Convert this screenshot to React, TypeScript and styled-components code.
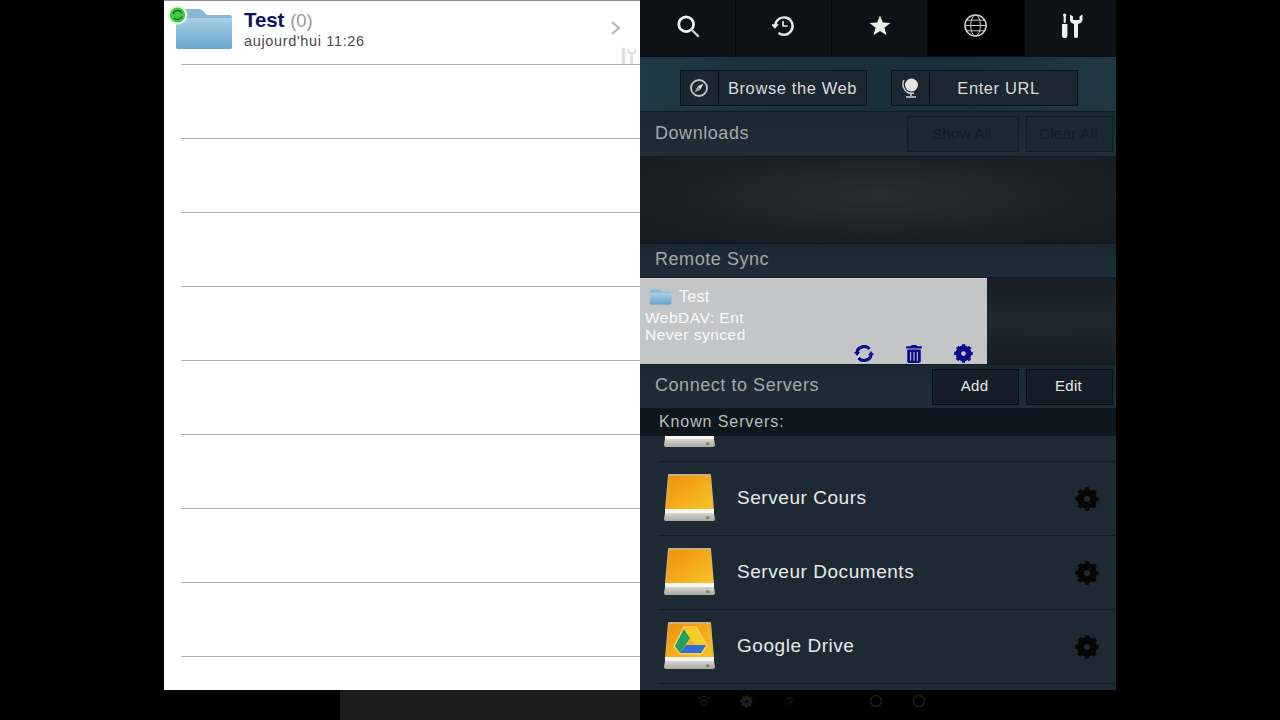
import React from "react";
import styled, { createGlobalStyle } from "styled-components";
import { FaTrashAlt } from "react-icons/fa";

const Global = createGlobalStyle`
  html, body { margin: 0; padding: 0; background: #000; height: 720px; overflow: hidden; }
  * { box-sizing: border-box; }
`;

const Page = styled.div`
  width: 1280px; height: 720px; display: flex; flex-direction: column; align-items: center;
  background: #000; font-family: "Liberation Sans", Arial, sans-serif;
`;
const Stage = styled.div`
  width: 952px; height: 690px; display: grid; grid-template-columns: 476px 476px; flex: none;
`;
const FileList = styled.div`
  position: relative; background: #fff; height: 690px; overflow: hidden; border-top: 1px solid #8f8f8f;
`;
const FileRow = styled.div<{ $first?: boolean }>`
  height: ${p => (p.$first ? 64 : 74)}px; margin-left: 17px; border-bottom: 1px solid #b4b4b4; flex: none;
`;
const FirstRowContent = styled.div`
  height: 100%; margin-left: -17px; display: flex; align-items: flex-start; position: relative;
`;
const FolderWrap = styled.div`
  width: 80px; padding: 7px 0 0 11px; flex: none; position: relative;
`;
const SyncBadge = styled.div`
  position: absolute; left: 3px; top: 4px; width: 21px; height: 20px;
`;
const FileText = styled.div`
  padding-top: 7px; display: flex; flex-direction: column; gap: 2px;
`;
const FileTitle = styled.div`
  font-size: 20.5px; line-height: 23px; font-weight: 700; color: #0b1560; letter-spacing: -0.1px;
`;
const FileCount = styled.span`
  font-weight: 400; color: #9a9a9a; margin-left: 6px; font-size: 18.5px;
`;
const FileDate = styled.div`
  font-size: 14.5px; line-height: 17px; color: #4a4a4a; letter-spacing: 0.65px; margin-top: -1px;
`;
const Chevron = styled.svg`
  position: absolute; right: 18px; top: 19px;
`;
const GhostTools = styled.svg`
  position: absolute; right: 3px; top: 46px; opacity: 0.25;
`;

const Side = styled.div`
  background: #1d2a34; height: 690px; display: flex; flex-direction: column; overflow: hidden; color: #eee;
`;
const Tabs = styled.div`
  height: 57px; flex: none; display: grid; grid-template-columns: 95px 95px 95px 96px 1fr; background: #05070a; gap: 1px;
  border-bottom: 1px solid #0a0e12;
`;
const Tab = styled.div<{ $active?: boolean }>`
  background: ${p => (p.$active ? "#000" : "#0e1217")};
  display: flex; align-items: center; justify-content: center; padding-bottom: 5px; height: 56px;
`;
const BrowseBar = styled.div`
  height: 55px; flex: none; display: flex; padding: 13px 0 0 40px; gap: 24px;
  background: linear-gradient(90deg, #1f3a44 0%, #1b303b 30%, #1b2f3a 70%, #213843 100%);
  border-bottom: 1px solid #0f1a21;
`;
const BrowseButton = styled.div`
  width: 187px; height: 36px; display: flex; background: #1a2630; border: 1px solid #0c1318;
`;
const BrowseIcon = styled.div`
  width: 38px; flex: none; display: flex; align-items: center; justify-content: center; border-right: 1px solid #0c1318;
`;
const BrowseLabel = styled.div<{ $shift?: number }>`
  flex: 1; display: flex; align-items: center; justify-content: center; font-size: 16.5px; color: #d9dcdc; letter-spacing: 0.6px;
  padding: 1px ${p => p.$shift ?? 0}px 0 0;
`;
const Header = styled.div<{ $h: number }>`
  height: ${p => p.$h}px; flex: none; display: flex; align-items: center; padding: 0 3px 0 15px; gap: 7px;
  background: linear-gradient(180deg, #1a2831, #1e2d37);
  border-bottom: 1px solid #0f1a21;
`;
const HeaderTitle = styled.div`
  flex: 1; font-size: 18px; color: #a3a9a9; letter-spacing: 0.55px; padding-bottom: 2px;
`;
const HeaderButton = styled.div<{ $w: number; $off?: boolean }>`
  width: ${p => p.$w}px; height: 36px; display: flex; align-items: center; justify-content: center;
  font-size: 15px; letter-spacing: 0.3px; padding: 0 2px 2px 0;
  color: ${p => (p.$off ? "#121d25" : "#e6e8e8")};
  background: ${p => (p.$off ? "#1a2832" : "#151e26")};
  border: 1px solid ${p => (p.$off ? "#121c24" : "#090e12")};
`;
const EmptyWell = styled.div`
  height: 87px; flex: none;
  background: radial-gradient(ellipse at 50% 45%, #262d33 0%, #1b2329 55%, #141b21 100%);
  border-bottom: 1px solid #0f1a21;
`;
const SyncArea = styled.div`
  height: 87px; flex: none; display: flex;
  background: radial-gradient(ellipse at 85% 50%, #20282f 0%, #161d24 80%);
  border-bottom: 1px solid #0f1a21;
`;
const SyncTile = styled.div`
  width: 347px; height: 86px; background: #c3c5c7; border-top: 1px solid #d8d8d8;
  padding: 9px 0 0 5px; display: flex; flex-direction: column; color: #fafafa;
`;
const SyncName = styled.div`
  display: flex; align-items: center; gap: 6px; padding-left: 3px; font-size: 16.5px; height: 17px; margin-bottom: 4px;
`;
const SyncLine = styled.div`
  font-size: 15.5px; line-height: 17px; letter-spacing: 0.5px;
`;
const SyncActions = styled.div`
  margin-top: auto; display: flex; justify-content: flex-end; align-items: center; gap: 31px; padding: 0 14px 1px 0; color: #0a0a8c; height: 20px;
`;
const KnownBar = styled.div`
  height: 27px; flex: none; display: flex; align-items: center; padding: 0 0 2px 19px;
  background: #0e171d; font-size: 16px; color: #b9bebe; letter-spacing: 0.9px;
`;
const Servers = styled.div`
  flex: 1; min-height: 0; overflow: hidden; background: #1d2a34;
`;
const ServerScroll = styled.div`
  margin-top: -48px;
`;
const ServerRow = styled.div`
  height: 74px; margin-left: 19px; display: flex; align-items: center; border-bottom: 1px solid #121c24; position: relative;
`;
const DriveSlot = styled.div`
  width: 78px; flex: none; padding-left: 5px; display: flex; align-items: center;
`;
const ServerName = styled.div`
  flex: 1; font-size: 19px; color: #e8eaea; letter-spacing: 0.55px; padding-bottom: 2px;
`;
const GearSlot = styled.div`
  width: 41px; flex: none; display: flex; justify-content: flex-start;
`;

const Footer = styled.div`
  width: 952px; height: 30px; flex: none; display: grid; grid-template-columns: 476px 476px;
`;
const FooterLeft = styled.div`
  display: flex; justify-content: flex-end;
`;
const DarkStrip = styled.div`
  width: 300px; height: 30px; background: #1d1d1d;
`;
const FooterRight = styled.div`
  display: flex; align-items: flex-start; padding: 3px 0 0 42px; color: #1f1f1f; font-size: 13px;
`;
const FooterItem = styled.div`
  width: 43px; height: 16px; display: flex; align-items: center; justify-content: center;
`;

const Folder = ({ w, h }: { w: number; h: number }) => {
  const id = `fold${w}`;
  return (
    <svg width={w} height={h} viewBox="0 0 58 42">
      <defs>
        <linearGradient id={id} x1="0" y1="0" x2="0" y2="1">
          <stop offset="0" stopColor="#a8d0e6" />
          <stop offset="1" stopColor="#68a6ca" />
        </linearGradient>
      </defs>
      <path d="M2 5 Q2 1 6 1 H24 Q27 1 29 4 L32 7 H55 Q57 7 57 10 V39 Q57 41 55 41 H3 Q1 41 1 39 Z" fill="#86b8d4" />
      <path d="M1 10 H57 V39 Q57 41 55 41 H3 Q1 41 1 39 Z" fill={`url(#${id})`} />
    </svg>
  );
};

const Gear = ({ size, color }: { size: number; color: string }) => (
  <svg width={size} height={size} viewBox="0 0 24 24" fill="none" stroke={color}>
    <circle cx="12" cy="12" r="6.5" strokeWidth="7" />
    <circle cx="12" cy="12" r="10" strokeWidth="3.6" strokeDasharray="3.9 3.95" strokeDashoffset="2" />
  </svg>
);

const Drive = ({ google }: { google?: boolean }) => {
  const id = google ? "driveG" : "driveO";
  return (
    <svg width="52" height="49" viewBox="0 0 52 49">
      <defs>
        <linearGradient id={id} x1="0" y1="0" x2="1" y2="1">
          <stop offset="0" stopColor="#ee9010" />
          <stop offset="0.6" stopColor="#f6ae1c" />
          <stop offset="1" stopColor="#f6c42e" />
        </linearGradient>
        <linearGradient id={`${id}b`} x1="0" y1="0" x2="0" y2="1">
          <stop offset="0" stopColor="#d8d6d0" />
          <stop offset="1" stopColor="#a8a8a4" />
        </linearGradient>
      </defs>
      <path d="M4 1 Q4 0 5 0 H46 Q47 0 47 1 L50 35 H1 Z" fill="#cdb07a" />
      <path d="M5 2 H46 L49 35 H2 Z" fill={`url(#${id})`} />
      <rect x="1" y="35" width="49" height="4" fill="#f8f6ee" />
      <path d="M1 39 H50 L51 45 Q51 47 49 47 H2 Q0 47 0 45 Z" fill={`url(#${id}b)`} />
      <rect x="42" y="42.5" width="3.5" height="2.5" fill="#7d8a55" />
      {google && (
        <g>
          <path d="M10 24 L20 5 H32 L43 24 L37 32 H16 Z" fill="#f6b62a" stroke="#f7dc7a" strokeWidth="1.2" />
          <path d="M20 7 L11 24 L16 31 L26 16 Z" fill="#1ea362" />
          <path d="M20 7 H32 L41 23 H31 Z" fill="#f7cc24" />
          <path d="M22 23 H42 L37 31 H16 Z" fill="#2f6fd8" />
        </g>
      )}
    </svg>
  );
};

const ToolsIcon = ({ size = 26, color = "#eeeeee" }: { size?: number; color?: string }) => (
  <svg width={size} height={size} viewBox="0 0 26 26" fill={color}>
    <rect x="5.6" y="1" width="2.2" height="9" rx="1" />
    <circle cx="6.7" cy="2" r="1.6" />
    <path d="M4 11 H9.4 V23 Q9.4 25 7.6 25 H5.8 Q4 25 4 23 Z" />
    <path d="M12 1.5 V6.5 Q12 10 16 11 V23.5 Q16 25 18 25 Q20 25 20 23.5 V11 Q24.5 10 24.5 6.5 V1.5 L21.5 3.5 V7 H15 V3.5 Z" />
  </svg>
);

const App = () => (
  <Page>
    <Global />
    <Stage>
      <FileList>
        <FileRow $first>
          <FirstRowContent>
            <FolderWrap>
              <Folder w={58} h={42} />
              <SyncBadge>
                <svg width="21" height="20" viewBox="0 0 21 20">
                  <ellipse cx="10.5" cy="10" rx="10" ry="9.5" fill="#e4f5de" />
                  <circle cx="10.5" cy="10" r="7.6" fill="#45c945" />
                  <path d="M6 9 A4.8 4.8 0 0 1 15 8.5 M15 11.5 A4.8 4.8 0 0 1 7 13" fill="none" stroke="#0f7a2a" strokeWidth="1.5" />
                </svg>
              </SyncBadge>
            </FolderWrap>
            <FileText>
              <FileTitle>Test<FileCount>(0)</FileCount></FileTitle>
              <FileDate>aujourd'hui 11:26</FileDate>
            </FileText>
            <Chevron width="12" height="16" viewBox="0 0 12 16">
              <path d="M2 2 L9 8 L2 14" fill="none" stroke="#b4b4b4" strokeWidth="2.2" />
            </Chevron>
            <GhostTools width="18" height="18" viewBox="0 0 26 26" fill="#888">
              <rect x="4" y="1" width="5" height="24" rx="2" />
              <path d="M12 1.5 V7 Q12 10 16 11 V25 H20 V11 Q24.5 10 24.5 7 V1.5 L21.5 3.5 V7 H15 V3.5 Z" />
            </GhostTools>
          </FirstRowContent>
        </FileRow>
        {Array.from({ length: 8 }).map((_, i) => <FileRow key={i} />)}
      </FileList>

      <Side>
        <Tabs>
          <Tab>
            <svg width="24" height="24" viewBox="0 0 26 26" fill="none">
              <circle cx="11" cy="11" r="8" stroke="#f4f4f4" strokeWidth="3" />
              <path d="M17 17 L24 24" stroke="#cfcfcf" strokeWidth="2.4" strokeLinecap="round" />
            </svg>
          </Tab>
          <Tab>
            <svg width="24" height="22" viewBox="2 0 26 24" fill="none">
              <path d="M5.5 11 A9.5 9.5 0 1 1 9 19.5" stroke="#e8e8e8" strokeWidth="2.6" />
              <path d="M0.5 10 L9.5 10 L5 15 Z" fill="#e8e8e8" />
              <path d="M14 6.5 V12 H19" stroke="#e8e8e8" strokeWidth="1.8" />
            </svg>
          </Tab>
          <Tab>
            <svg width="22" height="21" viewBox="0 0 22 21">
              <path d="M11 0.5 L13.8 7.6 L21.4 8 L15.5 12.8 L17.5 20.2 L11 16 L4.5 20.2 L6.5 12.8 L0.6 8 L8.2 7.6 Z" fill="#ececec" />
            </svg>
          </Tab>
          <Tab $active>
            <svg width="25" height="25" viewBox="1 0 26 26" fill="none" stroke="#cfcfcf">
              <circle cx="13" cy="13" r="11" strokeWidth="1.6" />
              <ellipse cx="13" cy="13" rx="5" ry="11" strokeWidth="1" />
              <path d="M2 13 H24 M4 7.5 H22 M4 18.5 H22" strokeWidth="1" />
            </svg>
          </Tab>
          <Tab><ToolsIcon /></Tab>
        </Tabs>

        <BrowseBar>
          <BrowseButton>
            <BrowseIcon>
              <svg width="20" height="20" viewBox="1 0 20 20" fill="none">
                <circle cx="10" cy="10" r="8" stroke="#c8c8c8" strokeWidth="1.8" />
                <path d="M14.5 5.5 L11.5 11.5 L8.5 8.5 Z" fill="#e0e0e0" />
                <path d="M5.5 14.5 L8.5 8.5 L11.5 11.5 Z" fill="#a8a8a8" />
              </svg>
            </BrowseIcon>
            <BrowseLabel>Browse the Web</BrowseLabel>
          </BrowseButton>
          <BrowseButton>
            <BrowseIcon>
              <svg width="20" height="22" viewBox="0 0 20 22" fill="none">
                <circle cx="10.5" cy="8" r="6.5" fill="#e4e4e4" />
                <path d="M3 3 A9 9 0 0 0 13 16" stroke="#d0d0d0" strokeWidth="1.5" />
                <path d="M10 16 V19 M5 20 H15" stroke="#d0d0d0" strokeWidth="1.5" />
              </svg>
            </BrowseIcon>
            <BrowseLabel $shift={10}>Enter URL</BrowseLabel>
          </BrowseButton>
        </BrowseBar>

        <Header $h={45}>
          <HeaderTitle>Downloads</HeaderTitle>
          <HeaderButton $w={112} $off>Show All</HeaderButton>
          <HeaderButton $w={87} $off>Clear All</HeaderButton>
        </Header>
        <EmptyWell />

        <Header $h={34}>
          <HeaderTitle>Remote Sync</HeaderTitle>
        </Header>
        <SyncArea>
          <SyncTile>
            <SyncName><Folder w={25} h={16} />Test</SyncName>
            <SyncLine>WebDAV: Ent</SyncLine>
            <SyncLine>Never synced</SyncLine>
            <SyncActions>
              <svg width="20" height="17" viewBox="0 0 20 17" fill="none">
                <path d="M3 8 A7 6.3 0 0 1 15.5 4" stroke="#0a0a8c" strokeWidth="3.2" />
                <path d="M17 9 A7 6.3 0 0 1 4.5 13" stroke="#0a0a8c" strokeWidth="3.2" />
                <path d="M0 7 H6 L3 11 Z M20 10 H14 L17 6 Z" fill="#0a0a8c" />
              </svg>
              <FaTrashAlt size={18} />
              <Gear size={19} color="#0a0a8c" />
            </SyncActions>
          </SyncTile>
        </SyncArea>

        <Header $h={44}>
          <HeaderTitle>Connect to Servers</HeaderTitle>
          <HeaderButton $w={87}>Add</HeaderButton>
          <HeaderButton $w={87}>Edit</HeaderButton>
        </Header>
        <KnownBar>Known Servers:</KnownBar>
        <Servers>
          <ServerScroll>
            <ServerRow><DriveSlot><Drive /></DriveSlot></ServerRow>
            <ServerRow>
              <DriveSlot><Drive /></DriveSlot>
              <ServerName>Serveur Cours</ServerName>
              <GearSlot><Gear size={24} color="#060606" /></GearSlot>
            </ServerRow>
            <ServerRow>
              <DriveSlot><Drive /></DriveSlot>
              <ServerName>Serveur Documents</ServerName>
              <GearSlot><Gear size={24} color="#060606" /></GearSlot>
            </ServerRow>
            <ServerRow>
              <DriveSlot><Drive google /></DriveSlot>
              <ServerName>Google Drive</ServerName>
              <GearSlot><Gear size={24} color="#060606" /></GearSlot>
            </ServerRow>
          </ServerScroll>
        </Servers>
      </Side>
    </Stage>
    <Footer>
      <FooterLeft><DarkStrip /></FooterLeft>
      <FooterRight>
        <FooterItem>
          <svg width="14" height="12" viewBox="0 0 14 12" fill="none" stroke="#1f1f1f" strokeWidth="1.2">
            <path d="M1 4 Q7 -1 13 4 M3 7 Q7 3.5 11 7 M5 10 Q7 8.5 9 10" />
          </svg>
        </FooterItem>
        <FooterItem><Gear size={13} color="#1f1f1f" /></FooterItem>
        <FooterItem>?</FooterItem>
        <FooterItem />
        <FooterItem>
          <svg width="14" height="14" viewBox="0 0 14 14" fill="none"><circle cx="7" cy="7" r="5.5" stroke="#1f1f1f" strokeWidth="1.4" /></svg>
        </FooterItem>
        <FooterItem>
          <svg width="14" height="14" viewBox="0 0 14 14" fill="none"><circle cx="7" cy="7" r="5.5" stroke="#1f1f1f" strokeWidth="1.4" /></svg>
        </FooterItem>
      </FooterRight>
    </Footer>
  </Page>
);

export default App;
